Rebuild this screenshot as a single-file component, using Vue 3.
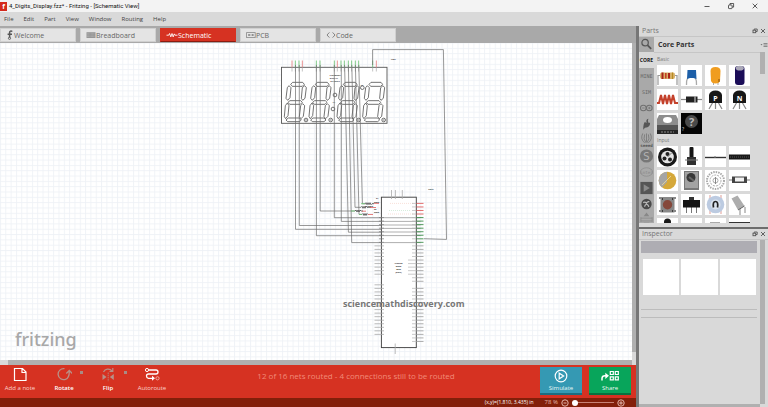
<script setup>
import { ref } from 'vue'

const menus = ['File', 'Edit', 'Part', 'View', 'Window', 'Routing', 'Help']
const tabs = [
  { id: 'welcome', label: 'Welcome' },
  { id: 'breadboard', label: 'Breadboard' },
  { id: 'schematic', label: 'Schematic' },
  { id: 'pcb', label: 'PCB' },
  { id: 'code', label: 'Code' }
]
const activeTab = ref('schematic')
const zoom = ref(0)
const note = ref('')

const bins = ['core', 'mine', 'sim', 'arduino', 'spark', 'seeed', 'snoot', 'intel', 'play', 'fan', 'more']
const activeBin = ref('core')
const basicParts = ['resistor', 'capacitor', 'tantalum', 'electrolytic', 'inductor', 'diode', 'pnp', 'npn', 'regulator', 'mystery']
const inputParts = ['rotary', 'pot', 'slide', 'softpot', 'trimmer', 'joystick', 'encoder', 'reed', 'button', 'switch', 'dial', 'tilt', 'mic', 'blank', 'jack', 'strip']

const digits = [0, 74, 158, 235]
const segments = [
  '62,118 68,112 98,112 103,118 97,124 67,124',
  '57,122 63,128 60,158 53,166 48,160 52,128',
  '104,122 109,128 105,160 98,166 94,160 97,128',
  '54,172 60,167 92,167 97,172 91,178 59,178',
  '52,174 57,182 54,212 47,221 43,215 46,182',
  '98,176 104,182 100,214 93,221 88,215 92,182',
  '48,225 55,219 88,219 94,225 88,230 53,230'
]
const topPins = [
  [66, 'r'], [76, 'g'], [87, 'g'], [97, 'r'], [139, 'g'], [150, 'g'], [193, 'g'], [202, 'r'],
  [213, 'g'], [223, 'g'], [235, 'g'], [245, 'g'], [256, 'g'], [266, 'g'], [308, 'g'], [319, 'r']
]
const wires = [
  'M295.5 65V229.3H381', 'M299.3 65V225.5H381', 'M316.4 65V235.7H381', 'M320.2 65V211H355',
  'M334.3 65V217.7H381', 'M341.3 65V221.4H381', 'M344.6 65L348.4 232.2H381',
  'M348.4 65L351.7 242.6H381', 'M351.8 65L355 207.3H361', 'M355.4 65L359 214.4H362',
  'M358.8 65L362.4 203.8H366', 'M372.6 65V49.6H443.4L446.5 239.4L424 238.7'
]
const step = 3.54
const rightPins = []
for (let i = 0; i < 40; i++) {
  if (i === 23) continue
  const color = i < 4 ? '#e06060' : i < 12 ? '#3f8f4c' : '#a5a5a5'
  rightPins.push({ y: 203.4 + i * step, color, inner: i > 15 && i < 21 ? 8 : 4 })
}
const leftPins = []
for (let i = 12; i < 38; i++) {
  if (i === 22 || i === 21) continue
  leftPins.push(203.4 + i * step)
}
const leftLinks = Array.from({ length: 12 }, (_, i) => 203.4 + i * step)
</script>

<template>
  <div class="app">
    <header class="titlebar">
      <span class="logo">f</span>
      <h1>4_Digits_Display.fzz* - Fritzing - [Schematic View]</h1>
      <div class="window-buttons">
        <button aria-label="Minimize"><svg viewBox="0 0 8 8"><path d="M1.5 4.5h5" /></svg></button>
        <button aria-label="Restore"><svg viewBox="0 0 8 8"><rect x="1.5" y="3" width="3.6" height="3.6" rx=".6" /><path d="M3 3V1.5h3.6v3.6H5.2" /></svg></button>
        <button aria-label="Close"><svg viewBox="0 0 8 8"><path d="M1.7 1.7l4.6 4.6M6.3 1.7L1.7 6.3" /></svg></button>
      </div>
    </header>

    <nav class="menubar">
      <button v-for="m in menus" :key="m">{{ m }}</button>
    </nav>

    <div class="workspace">
      <main class="editor">
        <nav class="tabs">
          <button v-for="t in tabs" :key="t.id" :class="['tab', { active: t.id === activeTab }]" @click="activeTab = t.id">
            <svg v-if="t.id === 'welcome'" class="i-welcome" viewBox="0 0 6 10"><path d="M5.3 1.5C4 .5 2.6 1 2.6 2.6V7.6M.6 4.2H5" fill="none" stroke="#555" stroke-width="1.5" /><circle cx="2.5" cy="8.3" r="1.1" fill="none" stroke="#555" stroke-width=".9" /></svg>
            <svg v-else-if="t.id === 'breadboard'" viewBox="0 0 10 10"><rect x=".5" y="2.2" width="9" height="5.8" fill="#969696" /><path d="M1 3.7h8M1 5.1h8M1 6.5h8" stroke="#c6c6c6" stroke-width=".5" stroke-dasharray=".7 .6" /></svg>
            <svg v-else-if="t.id === 'schematic'" class="i-wide" viewBox="0 0 12 10"><path d="M.5 5.2h2.2l.9-1.7 1.2 3.4 1.2-3.4 1.2 3.4 1.1-3 .7 1.3H11.5" fill="none" stroke="#fff" stroke-width=".9" /></svg>
            <svg v-else-if="t.id === 'pcb'" viewBox="0 0 10 10"><rect x=".6" y="2.6" width="8.6" height="5" fill="none" stroke="#888" stroke-width=".8" /><circle cx="3" cy="5" r="1" fill="#888" /><circle cx="6.8" cy="5" r="1" fill="#888" /><path d="M3 5h4" stroke="#888" stroke-width=".6" /></svg>
            <svg v-else viewBox="0 0 10 10"><path d="M3.4 2.4L1 5l2.4 2.6M6.6 2.4L9 5 6.6 7.6" fill="none" stroke="#858585" stroke-width="1" /></svg>
            <span>{{ t.label }}</span>
          </button>
        </nav>

        <div class="canvas-row">
          <div class="canvas">
            <svg class="sheet" viewBox="0 43 632 317" preserveAspectRatio="xMinYMin slice" role="img" aria-label="Schematic">
              <defs>
                <pattern id="grid" width="5.32" height="5.32" patternUnits="userSpaceOnUse">
                  <path d="M0 .5H5.32M.5 0V5.32" stroke="#edf1f5" stroke-width=".8" />
                </pattern>
              </defs>
              <rect x="0" y="43" width="632" height="317" fill="url(#grid)" />

              <rect x="281.5" y="67.3" width="105.5" height="56" fill="#fff" stroke="#555" stroke-width=".9" />
              <g transform="translate(270 45) scale(.3333)" fill="none" stroke="#484848" stroke-width="2.3">
                <g v-for="d in digits" :key="d" :transform="`translate(${d} 0)`">
                  <polygon v-for="(s, i) in segments" :key="i" :points="s" />
                </g>
                <g v-for="x in [108, 182, 266, 341]" :key="x">
                  <circle :cx="x" cy="225" r="5.5" /><circle :cx="x" cy="225" r="2" stroke-width="1" />
                </g>
                <circle cx="195" cy="150" r="5.5" /><circle cx="189" cy="192" r="5.5" /><circle cx="277" cy="128" r="5.5" />
              </g>
              <g v-for="[x, c] in topPins" :key="x">
                <path :d="`M${270 + x / 3} 60.5v7`" :stroke="c === 'r' ? '#e37878' : '#62bd68'" stroke-width=".8" />
                <path :d="`M${270 + x / 3} 67.5v4`" stroke="#aaa" stroke-width=".7" />
              </g>
              <g class="tiny" text-anchor="middle">
                <text x="335" y="75.5">7-SEGMENT</text><text x="334" y="78.5">DISPLAY</text><text x="335" y="81.5">CC-4DIGIT</text>
                <text x="393.5" y="59.8">LED1</text><text x="431" y="190">Part1</text><text x="334" y="103">L1</text><text x="362" y="86">L3</text>
              </g>

              <path v-for="w in wires" :key="w" :d="w" fill="none" stroke="#6c6c6c" stroke-width=".7" />

              <rect x="381.4" y="197.2" width="34.9" height="150.4" fill="#fff" stroke="#444" stroke-width=".95" />
              <path d="M391.5 190v9M395.4 190v9M402.3 190v9M395.2 343.5V354" stroke="#aaa" stroke-width=".8" />
              <path v-for="y in leftLinks.slice(4)" :key="'l' + y" :d="`M379 ${y}h5`" stroke="#777" stroke-width=".7" />
              <path d="M381.5 217.7h39M381.5 221.4h39M381.5 225h39M381.5 228.4h39M381.5 232h39M381.5 235.6h39M381.5 242.6h39" stroke="#8d8d8d" stroke-width=".7" />
              <path d="M390 203.4h23M388 214h25" stroke="#f3c9bd" stroke-width=".6" stroke-dasharray="1 1" />
              <path d="M389 210.5h22" stroke="#bfe0c4" stroke-width=".6" stroke-dasharray="1 1" />
              <path v-for="y in leftPins" :key="'p' + y" :d="`M374.5 ${y}h9.5`" stroke="#aaa" stroke-width=".8" />
              <g v-for="p in rightPins" :key="p.y">
                <path :d="`M416.3 ${p.y}h7.2`" :stroke="p.color" stroke-width=".9" />
                <path :d="`M${416 - p.inner} ${p.y}h${p.inner}`" stroke="#b5b5b5" stroke-width=".7" />
              </g>
              <path d="M365 203.7l1-1 1 2 1-2 1 2 1-2 1 2 1-1h2M361 207.3l1-1 1 2 1-2 1 2 1-2 1 1h4M355 211l1-1 1 2 1-2 1 2 1-2 1 1h2M362 214.5l1-1 1 2 1-2 1 2 1-2 1 1" fill="none" stroke="#444" stroke-width=".8" />
              <path d="M361 203.7h4M351 211h4M359 214.5h3" stroke="#68c972" stroke-width=".8" />
              <path d="M374 203.4h5M370 207.5h6M362 211.2h4M368 214.5h5" stroke="#e06060" stroke-width=".8" />
              <g class="tiny">
                <text x="376" y="199">R1</text><text x="374" y="202.5">220Ω</text><text x="365" y="206.5">R4 220Ω</text><text x="374" y="209.8">R2</text><text x="374" y="213">220Ω</text>
              </g>
              <g class="tiny" text-anchor="middle"><text x="398.5" y="264">Arduino</text><text x="398.5" y="267">Mega</text><text x="398.5" y="270">2560</text><text x="398.5" y="273">(Rev3)</text></g>
              <text class="watermark" x="343" y="307">sciencemathdiscovery.com</text>
              <text class="brand" x="15" y="346">fritzing</text>
            </svg>
          </div>
          <div class="v-scroll"></div>
        </div>
        <div class="h-scroll"></div>

        <div class="toolbar">
          <div class="tools">
            <button class="tool">
              <svg viewBox="0 0 16 16"><path d="M2.5 2.5h8l3.5 3.5v8.5H2.5zM10 2.5v4h4" fill="none" stroke="#fff" stroke-width="1.2" /></svg>
              <span>Add a note</span>
            </button>
            <button class="tool strong">
              <svg viewBox="0 0 16 16"><path d="M8.5 2.7A5.5 5.5 0 1 0 9.5 13.3M9.5 13.3Q13.5 12 13.3 5M10.3 7.5l3-3 3 3" fill="none" stroke="#b89087" stroke-width="1.3" /></svg>
              <span>Rotate</span><i class="dot"></i>
            </button>
            <button class="tool strong">
              <svg viewBox="0 0 16 16"><path d="M3.5 6C5 2.7 9.5 2 12 5M12.8 2v3.5H9.5" fill="none" stroke="#b89087" stroke-width="1.2" /><path d="M2.5 8v6l4-3zM13.8 8v6l-4-3z" fill="#b89087" /><path d="M8.2 6.5v9" stroke="#b89087" stroke-width=".8" stroke-dasharray="1.5 .7" /></svg>
              <span>Flip</span><i class="dot"></i>
            </button>
            <button class="tool">
              <svg viewBox="0 0 16 16"><path d="M4.5 4H12Q14 4 14 6T12 8H4.5Q2.5 8 2.5 10T4.5 12.3H10" fill="none" stroke="#fff" stroke-width="1.3" /><circle cx="3" cy="4" r="1.6" fill="#d63222" stroke="#fff" /><circle cx="13.5" cy="12.3" r="1.6" fill="none" stroke="#f0a79e" /><path d="M8 9.8l3 2.5-3 2.5z" fill="#fff" /></svg>
              <span>Autoroute</span>
            </button>
          </div>
          <p class="message">12 of 16 nets routed - 4 connections still to be routed</p>
          <div class="actions">
            <button class="action simulate">
              <svg viewBox="0 0 18 14"><circle cx="9" cy="7" r="5.8" fill="none" stroke="#fff" stroke-width="1.2" /><path d="M7.2 4.2v5.6L11.6 7z" fill="none" stroke="#fff" stroke-width="1.2" /></svg>
              <span>Simulate</span>
            </button>
            <button class="action share">
              <svg viewBox="0 0 18 14"><path d="M1 11.5V9.5Q1 6.8 4 6.8H6" fill="none" stroke="#fff" stroke-width="1.5" /><path d="M4.3 3.7L8 6.8 4.3 9.9z" fill="#fff" /><path d="M9.3 2.5h3v3h-3zM14.3 2.5h3v3h-3zM9.3 7.8h3v3h-3zM14.3 7.8h3v3h-3z" fill="none" stroke="#fff" stroke-width="1.2" /></svg>
              <span>Share</span>
            </button>
          </div>
        </div>

        <footer class="status">
          <span class="coords">(x,y)=(1.810, 3.435) in</span>
          <label for="zoom">78 %</label>
          <button aria-label="Zoom out"><svg viewBox="0 0 8 8"><circle cx="4" cy="4" r="3.2" /><path d="M2.5 4h3" /></svg></button>
          <input id="zoom" v-model="zoom" type="range" min="0" max="100" />
          <button aria-label="Zoom in"><svg viewBox="0 0 8 8"><circle cx="4" cy="4" r="3.2" /><path d="M2.2 4h3.6M4 2.2v3.6" /></svg></button>
        </footer>
      </main>

      <aside class="docks">
        <section class="dock parts">
          <header class="dock-head">
            <h2>Parts</h2>
            <button aria-label="Float parts"><svg viewBox="0 0 6 6"><rect x="1" y="2.2" width="2.7" height="2.5" /><path d="M2.2 2V1h3v2.5H4" /></svg></button>
            <button aria-label="Close parts"><svg viewBox="0 0 6 6"><path d="M1 1l4 4M5 1L1 5" /></svg></button>
          </header>
          <div class="bin-head">
            <button class="search" aria-label="Search parts"><svg viewBox="0 0 16 16"><circle cx="6.5" cy="6" r="3.4" fill="none" stroke="#555" stroke-width="1.3" /><path d="M9 8.7l4 4" stroke="#555" stroke-width="1.9" /></svg></button>
            <h3>Core Parts</h3>
            <button class="bin-menu" aria-label="Bin menu"><svg viewBox="0 0 8 6"><path d="M3.5 1.5h4M3.5 3h4M3.5 4.5h4" stroke="#777" stroke-width=".8" /><path d="M.5 2h2L1.5 3.4z" fill="#777" /></svg></button>
          </div>
          <div class="bin-body">
            <nav class="bins">
              <button v-for="b in bins" :key="b" :class="['bin', b, { active: b === activeBin }]" :aria-label="b" @click="activeBin = b">
                <span v-if="b === 'core' || b === 'mine' || b === 'sim'">{{ b.toUpperCase() }}</span>
                <svg v-else viewBox="0 0 16 16">
                  <g v-if="b === 'arduino'" fill="none" stroke="#707070" stroke-width="1.1"><circle cx="4.6" cy="8" r="3" /><circle cx="11" cy="8" r="3" /><path d="M3.3 8H6M9.7 8h2.6M11 6.7v2.6" stroke-width=".8" /></g>
                  <path v-else-if="b === 'spark'" d="M10 2.5Q6.8 3.5 8.2 6.5 7 7 6.5 5.5 4.5 7 4.5 14 6 11.5 9 11.5 12 10.5 11.8 6.5 10.5 7.5 10 6.5 9 4.5 10 2.5z" fill="#555" />
                  <g v-else-if="b === 'seeed'"><path d="M4 1Q1 7 6 11M6 2Q4 7 7.5 11M12 1Q15 7 10 11M10 2Q12 7 8.5 11M8 1v9" fill="none" stroke="#777" stroke-width=".9" /><text x="8" y="15" text-anchor="middle" font-size="4.5" font-weight="700" fill="#555">seeed</text></g>
                  <g v-else-if="b === 'snoot'"><circle cx="8" cy="8" r="7" fill="#777" /><text x="8" y="12.3" text-anchor="middle" font-size="12" fill="#b2b2b2">S</text></g>
                  <g v-else-if="b === 'intel'"><ellipse cx="8" cy="8" rx="6.5" ry="4.5" fill="none" stroke="#8b8b8b" stroke-width=".8" /><text x="8" y="9.7" text-anchor="middle" font-size="4.5" fill="#888">intel</text></g>
                  <g v-else-if="b === 'play'"><rect x="1.5" y="1.5" width="13" height="13" fill="#555" /><path d="M5 4v8l6.5-4z" fill="#8a8a8a" /></g>
                  <g v-else-if="b === 'fan'"><circle cx="8" cy="8" r="5.5" fill="#4a4a4a" /><path d="M4.5 6.5q2-1 3.5.5 1-2 3-1.5M6 11q0-2 2-3 2 1 2.5 3" fill="none" stroke="#bbb" stroke-width="1.3" /></g>
                  <g v-else><path d="M8 0l3 4H5zM8 15l3-4H5z" fill="#888" /><path d="M2 6h12M2 9h12M2 5v5M14 5v5" stroke="#888" stroke-width=".8" /></g>
                </svg>
              </button>
            </nav>
            <div class="part-list">
              <template v-for="group in [{ name: 'Basic', items: basicParts }, { name: 'Input', items: inputParts }]" :key="group.name">
                <h4>{{ group.name }}</h4>
                <div class="grid">
                  <button v-for="p in group.items" :key="p" class="part" :aria-label="p">
                    <svg viewBox="0 0 21 21">
                      <g v-if="p === 'resistor'"><path d="M1 20V10.5H20V20" fill="none" stroke="#999" stroke-width="1.2" /><rect x="3" y="7.5" width="15" height="6.5" rx="2" fill="#d9b26b" /><path d="M5.5 7.5v6.5M12 8v5.5" stroke="#a82219" stroke-width="2" /><path d="M8.8 8v5.5" stroke="#c03a22" stroke-width="1.5" /><path d="M15.5 7.5v6.5" stroke="#b68a22" stroke-width="1.2" /></g>
                      <g v-else-if="p === 'capacitor'"><path d="M7 12q-2 4-1.5 8M14 12q2 4 1.5 8" fill="none" stroke="#aaa" stroke-width="1.3" /><path d="M6.5 5h8.5l.5 9-3-1H9l-3 1z" fill="#1d5fa8" /></g>
                      <g v-else-if="p === 'tantalum'"><path d="M8.5 16v4M13 16v4" stroke="#aaa" /><path d="M5.5 6Q5.5 2 10.5 2t5 4l-.5 10q-1 2.5-4.5 2.5T6 16z" fill="#f09d20" /><path d="M14 14v3" stroke="#83510c" /></g>
                      <g v-else-if="p === 'electrolytic'"><rect x="6" y="1" width="9.5" height="19" rx="3" fill="#1b0d58" /><ellipse cx="10.8" cy="3.2" rx="4" ry="2.4" fill="#aaa8b8" /></g>
                      <g v-else-if="p === 'inductor'" fill="none" stroke="#c4412b"><path d="M0 14H2L4 6 6 15 8 6 10 15 12 6 14 15 16 6 18 14H21" stroke-width="2" /></g>
                      <g v-else-if="p === 'diode'"><path d="M0 10.5h21" stroke="#888" stroke-width="1.2" /><rect x="5" y="7.5" width="11.5" height="6" fill="#222" /><path d="M14 7.5v6" stroke="#ddd" /></g>
                      <g v-else-if="p === 'pnp' || p === 'npn'"><path d="M8 13L4 20M10.5 13v7M13 13l4 7" stroke="#888" stroke-width="1.2" /><path d="M4 14V6Q5 1.5 10.5 1.5T17 6v8z" fill="#171717" /><text x="10.5" y="12" text-anchor="middle" font-size="7" font-weight="700" fill="#fff">{{ p === 'pnp' ? 'P' : 'N' }}</text></g>
                      <g v-else-if="p === 'regulator'"><path d="M0 21V6l2-4h17l2 4v15z" fill="#8d8d8d" /><ellipse cx="10.5" cy="7" rx="4.5" ry="3" fill="#fff" /><path d="M0 12h21v9H0z" fill="#555" /><path d="M0 17h21v4H0z" fill="#252525" /><path d="M4 19h13" stroke="#888" stroke-dasharray="2 1" /></g>
                      <g v-else-if="p === 'mystery'"><rect width="21" height="21" fill="#050505" /><circle cx="10.5" cy="8.5" r="6.5" fill="#4a4a4a" /><text x="10.5" y="12.5" text-anchor="middle" font-size="11" font-weight="700" fill="#bbb">?</text><text x="1" y="17.5" font-size="5" fill="#ddd">?</text></g>
                      <g v-else-if="p === 'rotary'"><circle cx="10.5" cy="11" r="9.5" fill="#191919" /><circle cx="10.5" cy="11" r="6.3" fill="#e4e4e4" /><circle cx="10.5" cy="8" r="2" fill="#222" /><circle cx="7.5" cy="12.5" r="2" fill="#222" /><circle cx="13" cy="13.5" r="2" fill="#222" /><path d="M10.5 11l4-4" stroke="#777" /></g>
                      <g v-else-if="p === 'pot'"><rect x="8.5" y="1" width="4" height="12" rx="1" fill="#151515" /><path d="M6 11h9v8H6z" fill="#303030" /><path d="M4 14h13" stroke="#777" /></g>
                      <g v-else-if="p === 'slide'"><path d="M0 11.5h21" stroke="#333" stroke-width="1.4" /><path d="M10 10v2" stroke="#777" /></g>
                      <g v-else-if="p === 'softpot'"><rect y="8.5" width="21" height="5" fill="#191919" /><path d="M1 11h19" stroke="#555" stroke-dasharray="1 1" /></g>
                      <g v-else-if="p === 'trimmer'"><circle cx="10.5" cy="10.5" r="8.8" fill="#d5a83a" /><path d="M4.3 4.3A8.8 8.8 0 0 0 5 17.5L10 12V1.7A8.8 8.8 0 0 0 4.3 4.3z" fill="#a5a5a5" /><path d="M5 15l9-9" stroke="#e2cf95" /></g>
                      <g v-else-if="p === 'joystick'"><rect x="3" y="1" width="15" height="19" fill="#777" /><rect x="4" y="2" width="13" height="16" fill="#a3a3a3" /><circle cx="10" cy="7.5" r="4.5" fill="#383838" /><path d="M8 7l5 4" stroke="#666" stroke-width="2" /></g>
                      <g v-else-if="p === 'encoder'" fill="none" stroke="#aaa"><circle cx="10.5" cy="10.5" r="8.5" stroke-width="2" stroke-dasharray="1.5 1" /><circle cx="10.5" cy="10.5" r="5.5" stroke-dasharray="2 1" /><circle cx="10.5" cy="10.5" r="2.5" /><path d="M10.5 7v7" stroke="#888" /></g>
                      <g v-else-if="p === 'reed'"><path d="M0 10h21" stroke="#777" /><rect x="3" y="6.5" width="15" height="6.5" fill="#444" /><rect x="6" y="7.5" width="9" height="4" fill="#f1f1f1" /></g>
                      <g v-else-if="p === 'button'"><path d="M2 4h3M16 4h3M2 17h3M16 17h3" stroke="#888" stroke-width="2" /><rect x="3.5" y="3" width="14" height="15.5" fill="#888" /><circle cx="10.5" cy="10.8" r="4.7" fill="#85483b" /><path d="M5 5h1M15 5h1M5 17h1M15 17h1" stroke="#222" stroke-width="1.5" /></g>
                      <g v-else-if="p === 'switch'"><path d="M5.5 11v8M10.5 11v8M15.5 11v8" stroke="#777" /><rect x="8" y="3" width="5" height="4" fill="#333" /><rect x="2" y="6" width="17" height="7.5" fill="#151515" /></g>
                      <g v-else-if="p === 'dial'"><path d="M5 1v4M16 1v4M5 16v4M16 16v4" stroke="#df9d95" /><circle cx="10.5" cy="10.5" r="8.8" fill="#bccbe1" /><circle cx="10.5" cy="10.5" r="5" fill="#dbe3ed" /><path d="M8.5 13.5q-1-6 2-6t2 6" fill="none" stroke="#222" stroke-width="1.7" /></g>
                      <g v-else-if="p === 'tilt'"><path d="M11 14v7M16 13v6" stroke="#888" /><path d="M2.5 4.5l6-3 7 10.5-6.5 4z" fill="#adadad" /><path d="M9 16l6.5-4" stroke="#666" /></g>
                      <circle v-else-if="p === 'mic'" cx="10.5" cy="4" r="3.5" fill="#191919" />
                      <path v-else-if="p === 'jack'" d="M5 4h10v3H5z" fill="#aaa" />
                      <path v-else-if="p === 'strip'" d="M0 4h21v3H0z" fill="#333" />
                    </svg>
                  </button>
                </div>
              </template>
            </div>
            <div class="list-scroll"><i></i></div>
          </div>
        </section>

        <section class="dock inspector">
          <header class="dock-head">
            <h2>Inspector</h2>
            <button aria-label="Float inspector"><svg viewBox="0 0 6 6"><rect x="1" y="2.2" width="2.7" height="2.5" /><path d="M2.2 2V1h3v2.5H4" /></svg></button>
            <button aria-label="Close inspector"><svg viewBox="0 0 6 6"><path d="M1 1l4 4M5 1L1 5" /></svg></button>
          </header>
          <div class="inspector-body">
            <div class="inspector-main">
              <input v-model="note" class="part-name" aria-label="Part name" />
              <div class="views"><i></i><i></i><i></i></div>
              <hr /><hr />
            </div>
            <div class="inspector-scroll"></div>
          </div>
          <div class="inspector-bottom"></div>
        </section>
      </aside>
    </div>
  </div>
</template>

<style>
body {
  margin: 0;
}
</style>

<style scoped>
* {
  box-sizing: border-box;
}
.app {
  display: flex;
  flex-direction: column;
  height: 100vh;
  overflow: hidden;
  background: #d9d9d9;
  font-family: "Open Sans", "Noto Sans", sans-serif;
  font-size: 6px;
  color: #444;
}
button {
  display: flex;
  align-items: center;
  margin: 0;
  padding: 0;
  border: 0;
  background: none;
  color: inherit;
  font: inherit;
  line-height: inherit;
}
h1, h2, h3, h4, p {
  margin: 0;
  font: inherit;
}
svg {
  display: block;
}
.titlebar {
  display: flex;
  align-items: center;
  flex: none;
  height: 12px;
  gap: 2px;
  background: #f3f3f3;
}
.titlebar h1 {
  flex: 1;
  font-family: Roboto, sans-serif;
  line-height: 12px;
  color: #111;
}
.logo {
  width: 7px;
  height: 9px;
  background: #d42a1c;
  color: #fff;
  font-size: 7px;
  font-weight: 700;
  line-height: 9px;
  text-align: center;
}
.window-buttons {
  display: flex;
  gap: 16px;
  padding-right: 9px;
}
.window-buttons svg {
  width: 8px;
  height: 8px;
  fill: none;
  stroke: #333;
  stroke-width: 0.8;
}
.menubar {
  display: flex;
  flex: none;
  gap: 10px;
  height: 14px;
  padding-left: 4px;
  line-height: 14px;
}
.workspace {
  display: flex;
  flex: 1;
  min-height: 0;
}
.editor {
  display: flex;
  flex-direction: column;
  flex: 1;
  min-width: 0;
}
.tabs {
  display: flex;
  flex: none;
  gap: 4px;
  height: 17px;
  padding: 2px 0 1px;
  background: #a9a9a9;
}
.tab {
  width: 76px;
  padding-left: 5px;
  border: 1px solid #d0d0d0;
  background: #e4e4e4;
  color: #666;
  font-size: 7px;
}
.tab svg {
  width: 10px;
  height: 10px;
}
.tab .i-welcome {
  width: 8px;
}
.tab .i-wide {
  width: 12px;
}
.tab.active {
  border-color: #d63222 #d63222 #8c1c10;
  background: #d63222;
  color: #fff;
}
.canvas-row {
  display: flex;
  flex: 1;
  min-height: 0;
}
.canvas {
  flex: 1;
  min-width: 0;
  background: #fff;
}
.sheet {
  width: 100%;
  height: 100%;
}
.tiny {
  font-size: 2px;
  font-weight: 700;
  fill: #222;
}
.watermark {
  font-size: 9px;
  font-weight: 700;
  fill: #777;
}
.brand {
  font-family: "Noto Sans", sans-serif;
  font-size: 18px;
  font-weight: 500;
  fill: #a8a8a8;
}
.v-scroll {
  width: 4px;
  margin-bottom: 8px;
  background: #b0b0b0;
}
.h-scroll {
  flex: none;
  height: 5px;
  margin: 0 4px 0 8px;
  background: #b0b0b0;
}
.toolbar {
  display: flex;
  flex: none;
  height: 33px;
  background: #d63222;
}
.tools {
  display: flex;
  gap: 4px;
}
.tool {
  position: relative;
  flex-direction: column;
  width: 40px;
  padding-top: 1px;
  gap: 1px;
  color: #fbd2cd;
  line-height: 10px;
  white-space: nowrap;
}
.tool svg {
  width: 16px;
  height: 16px;
}
.tool.strong {
  color: #fff;
  font-weight: 600;
}
.dot {
  position: absolute;
  top: 6px;
  right: 1px;
  width: 3px;
  height: 3px;
  background: #a98a84;
}
.message {
  flex: 1;
  color: #f18b78;
  font-size: 8px;
  line-height: 22px;
  text-align: center;
  white-space: nowrap;
}
.actions {
  display: flex;
  gap: 7px;
  padding: 2px 5px 3px 0;
}
.action {
  flex-direction: column;
  width: 42px;
  padding-top: 2px;
  gap: 1px;
  color: #e8f6f4;
  line-height: 8px;
}
.action svg {
  width: 18px;
  height: 14px;
}
.simulate {
  border-bottom: 2px solid #1c6d80;
  background: #3599b3;
}
.share {
  border-bottom: 2px solid #08713f;
  background: #08a55b;
}
.status {
  display: flex;
  align-items: center;
  justify-content: flex-end;
  flex: none;
  height: 9px;
  gap: 3px;
  padding-right: 11px;
  background: #831f0a;
  color: #e5b8ae;
  line-height: 9px;
}
.coords {
  margin-right: 8px;
  color: #fff;
  font-size: 5px;
}
.status svg {
  width: 8px;
  height: 8px;
  fill: none;
  stroke: #edc5bd;
  stroke-width: 0.9;
}
.status input {
  width: 42px;
  height: 7px;
  margin: 0;
  appearance: none;
  background: linear-gradient(#c98276, #c98276) center / 100% 1px no-repeat;
}
.status input::-webkit-slider-thumb {
  width: 6px;
  height: 6px;
  appearance: none;
  border-radius: 50%;
  background: #fff;
}
.docks {
  display: flex;
  flex-direction: column;
  flex: none;
  width: 132px;
  border-left: 3px solid #777;
}
.dock {
  display: flex;
  flex-direction: column;
  min-height: 0;
}
.parts {
  flex: 199;
  padding-bottom: 4px;
  border-bottom: 2px solid #6d6d6d;
}
.inspector {
  flex: 180;
}
.dock-head {
  display: flex;
  align-items: center;
  flex: none;
  height: 11px;
  gap: 2px;
  padding: 0 2px 0 3px;
  border-bottom: 1px solid #c6c6c6;
}
.dock-head h2 {
  flex: 1;
  color: #777;
  font-size: 7px;
  line-height: 10px;
}
.dock-head svg {
  width: 6px;
  height: 6px;
  fill: none;
  stroke: #555;
  stroke-width: 0.9;
}
.bin-head {
  display: flex;
  align-items: center;
  flex: none;
  height: 15px;
}
.search {
  width: 15px;
  height: 15px;
  background: #a9a9a9;
}
.search svg {
  width: 15px;
  height: 15px;
}
.bin-head h3 {
  flex: 1;
  padding-left: 4px;
  color: #333;
  font-size: 7px;
  font-weight: 700;
}
.bin-menu svg {
  width: 8px;
  height: 6px;
}
.bin-body {
  display: flex;
  flex: 1;
  min-height: 0;
  overflow: hidden;
}
.bins {
  width: 15px;
  background: #a9a9a9;
}
.bin {
  justify-content: center;
  width: 15px;
  height: 16px;
  color: #666;
  font-family: "DejaVu Sans Mono", monospace;
  font-size: 5px;
}
.bin.active {
  background: #d9d9d9;
  color: #111;
  font-family: "Open Sans", sans-serif;
  font-weight: 700;
}
.bin svg {
  width: 15px;
  height: 16px;
}
.part-list {
  flex: 1;
  padding-left: 3px;
  overflow: hidden;
  border-top: 1px solid #c6c6c6;
}
.part-list h4 {
  height: 12px;
  color: #777;
  font-size: 5px;
  line-height: 12px;
}
.grid {
  display: grid;
  grid-template-columns: repeat(4, 21px);
  gap: 3px;
}
.part {
  width: 21px;
  height: 21px;
  background: #fff;
}
.part svg {
  width: 21px;
  height: 21px;
}
.list-scroll {
  width: 8px;
}
.list-scroll i {
  display: block;
  width: 5px;
  height: 22px;
  background: #b0b0b0;
}
.inspector-body {
  display: flex;
  flex: 1;
  gap: 3px;
  min-height: 0;
}
.inspector-main {
  flex: 1;
  padding: 1px 0 0 2px;
}
.part-name {
  display: block;
  width: 100%;
  height: 12px;
  padding: 0 2px;
  border: 0;
  background: #aeadb3;
  font-size: 7px;
}
.views {
  display: grid;
  grid-template-columns: repeat(3, 1fr);
  gap: 2px;
  padding: 6px 1px 14px 2px;
}
.views i {
  aspect-ratio: 1;
  background: #fff;
}
hr {
  height: 1px;
  margin: 0 0 7px;
  border: 0;
  background: #bcbcbc;
}
.inspector-scroll {
  width: 5px;
  margin-right: 3px;
  background: #b0b0b0;
}
.inspector-bottom {
  flex: none;
  height: 3px;
  margin-right: 8px;
  background: #b0b0b0;
}
</style>
